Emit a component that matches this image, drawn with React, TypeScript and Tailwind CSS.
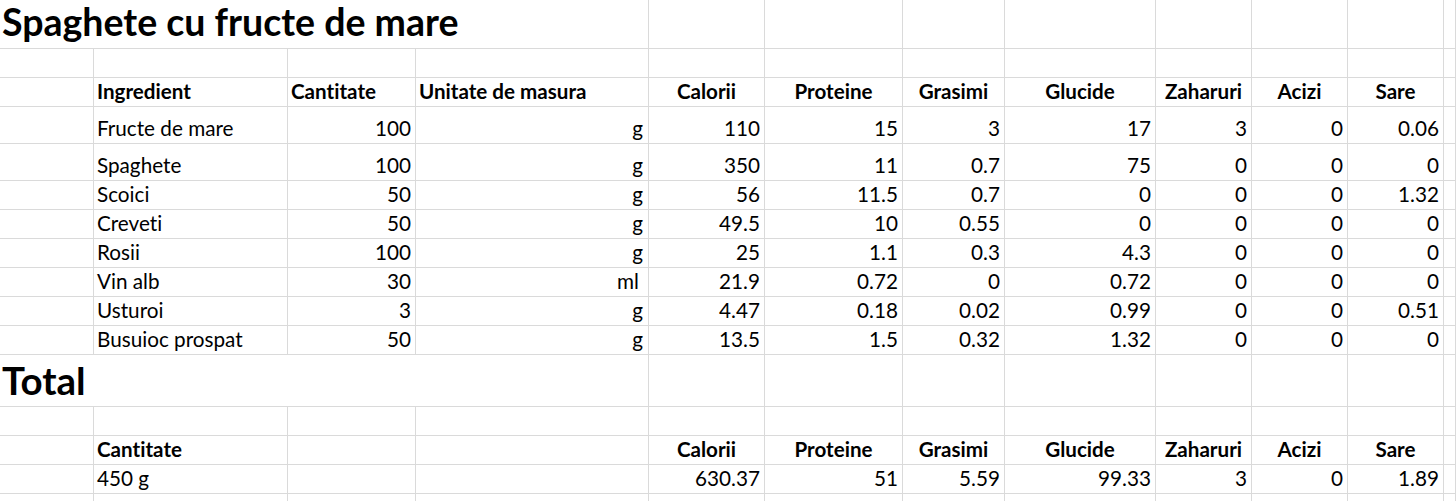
import React from "react";

const COLS =
  "grid grid-cols-[94px_194px_128px_233px_116px_138px_102px_151px_96px_96px_96px_1fr]";
const B = "border-[#dadada]";

type Align = "left" | "right" | "center";

function Cell({
  children,
  align = "left",
  bold = false,
  pr,
}: {
  children?: React.ReactNode;
  align?: Align;
  bold?: boolean;
  pr?: string;
}) {
  const j =
    align === "right" ? "justify-end" : align === "center" ? "justify-center" : "justify-start";
  const pad = align === "right" ? pr ?? "pr-[4px]" : align === "left" ? "pl-[3px]" : "";
  return (
    <div
      className={`flex items-end ${j} ${pad} pb-[3px] border-r border-b ${B} whitespace-nowrap ${
        bold ? "font-bold text-[20.6px]" : "text-[20.7px]"
      } leading-[24px]`}
    >
      {children}
    </div>
  );
}

function Row({ h, children }: { h: string; children: React.ReactNode }) {
  return <div className={`${COLS} ${h}`}>{children}</div>;
}

const heads = ["Calorii", "Proteine", "Grasimi", "Glucide", "Zaharuri", "Acizi", "Sare"];

const data: [string, string, string, string[]][] = [
  ["Fructe de mare", "100", "g", ["110", "15", "3", "17", "3", "0", "0.06"]],
  ["Spaghete", "100", "g", ["350", "11", "0.7", "75", "0", "0", "0"]],
  ["Scoici", "50", "g", ["56", "11.5", "0.7", "0", "0", "0", "1.32"]],
  ["Creveti", "50", "g", ["49.5", "10", "0.55", "0", "0", "0", "0"]],
  ["Rosii", "100", "g", ["25", "1.1", "0.3", "4.3", "0", "0", "0"]],
  ["Vin alb", "30", "ml", ["21.9", "0.72", "0", "0.72", "0", "0", "0"]],
  ["Usturoi", "3", "g", ["4.47", "0.18", "0.02", "0.99", "0", "0", "0.51"]],
  ["Busuioc prospat", "50", "g", ["13.5", "1.5", "0.32", "1.32", "0", "0", "0"]],
];

function EmptyTail({ n = 8 }: { n?: number }) {
  return (
    <>
      {Array.from({ length: n }).map((_, i) => (
        <Cell key={i} />
      ))}
    </>
  );
}

function BigTitle({ children, size }: { children: React.ReactNode; size: string }) {
  return (
    <div
      className={`col-span-4 flex items-end pl-[2px] pb-[6px] border-r border-b ${B} whitespace-nowrap font-bold ${size} leading-[40px]`}
    >
      {children}
    </div>
  );
}

export default function App() {
  return (
    <div className="w-[1456px] h-[501px] overflow-hidden bg-white text-black font-['Lato',_sans-serif] [font-variant-ligatures:none]">
      <Row h="h-[49px]">
        <BigTitle size="text-[37.5px]">Spaghete cu fructe de mare</BigTitle>
        <EmptyTail />
      </Row>
      <Row h="h-[29px]">
        <Cell />
        <Cell />
        <Cell />
        <Cell />
        <EmptyTail />
      </Row>
      <Row h="h-[29px]">
        <Cell />
        <Cell bold>Ingredient</Cell>
        <Cell bold>Cantitate</Cell>
        <Cell bold>Unitate de masura</Cell>
        {heads.map((t) => (
          <Cell key={t} bold align="center">
            {t}
          </Cell>
        ))}
        <Cell />
      </Row>
      {data.map(([name, q, u, vals], i) => (
        <Row key={name} h={i < 2 ? "h-[37px]" : "h-[29px]"}>
          <Cell />
          <Cell>{name}</Cell>
          <Cell align="right">{q}</Cell>
          <Cell align="right" pr={u === "ml" ? "pr-[9px]" : "pr-[5px]"}>
            {u}
          </Cell>
          {vals.map((v, k) => (
            <Cell key={k} align="right">
              {v}
            </Cell>
          ))}
          <Cell />
        </Row>
      ))}
      <Row h="h-[52px]">
        <BigTitle size="text-[38.5px]">Total</BigTitle>
        <EmptyTail />
      </Row>
      <Row h="h-[29px]">
        <Cell />
        <Cell />
        <Cell />
        <Cell />
        <EmptyTail />
      </Row>
      <Row h="h-[29px]">
        <Cell />
        <Cell bold>Cantitate</Cell>
        <Cell />
        <Cell />
        {heads.map((t) => (
          <Cell key={t} bold align="center">
            {t}
          </Cell>
        ))}
        <Cell />
      </Row>
      <Row h="h-[29px]">
        <Cell />
        <Cell>450 g</Cell>
        <Cell />
        <Cell />
        {["630.37", "51", "5.59", "99.33", "3", "0", "1.89"].map((v, k) => (
          <Cell key={k} align="right">
            {v}
          </Cell>
        ))}
        <Cell />
      </Row>
      <Row h="h-[29px]">
        <Cell />
        <Cell />
        <Cell />
        <Cell />
        <EmptyTail />
      </Row>
    </div>
  );
}
